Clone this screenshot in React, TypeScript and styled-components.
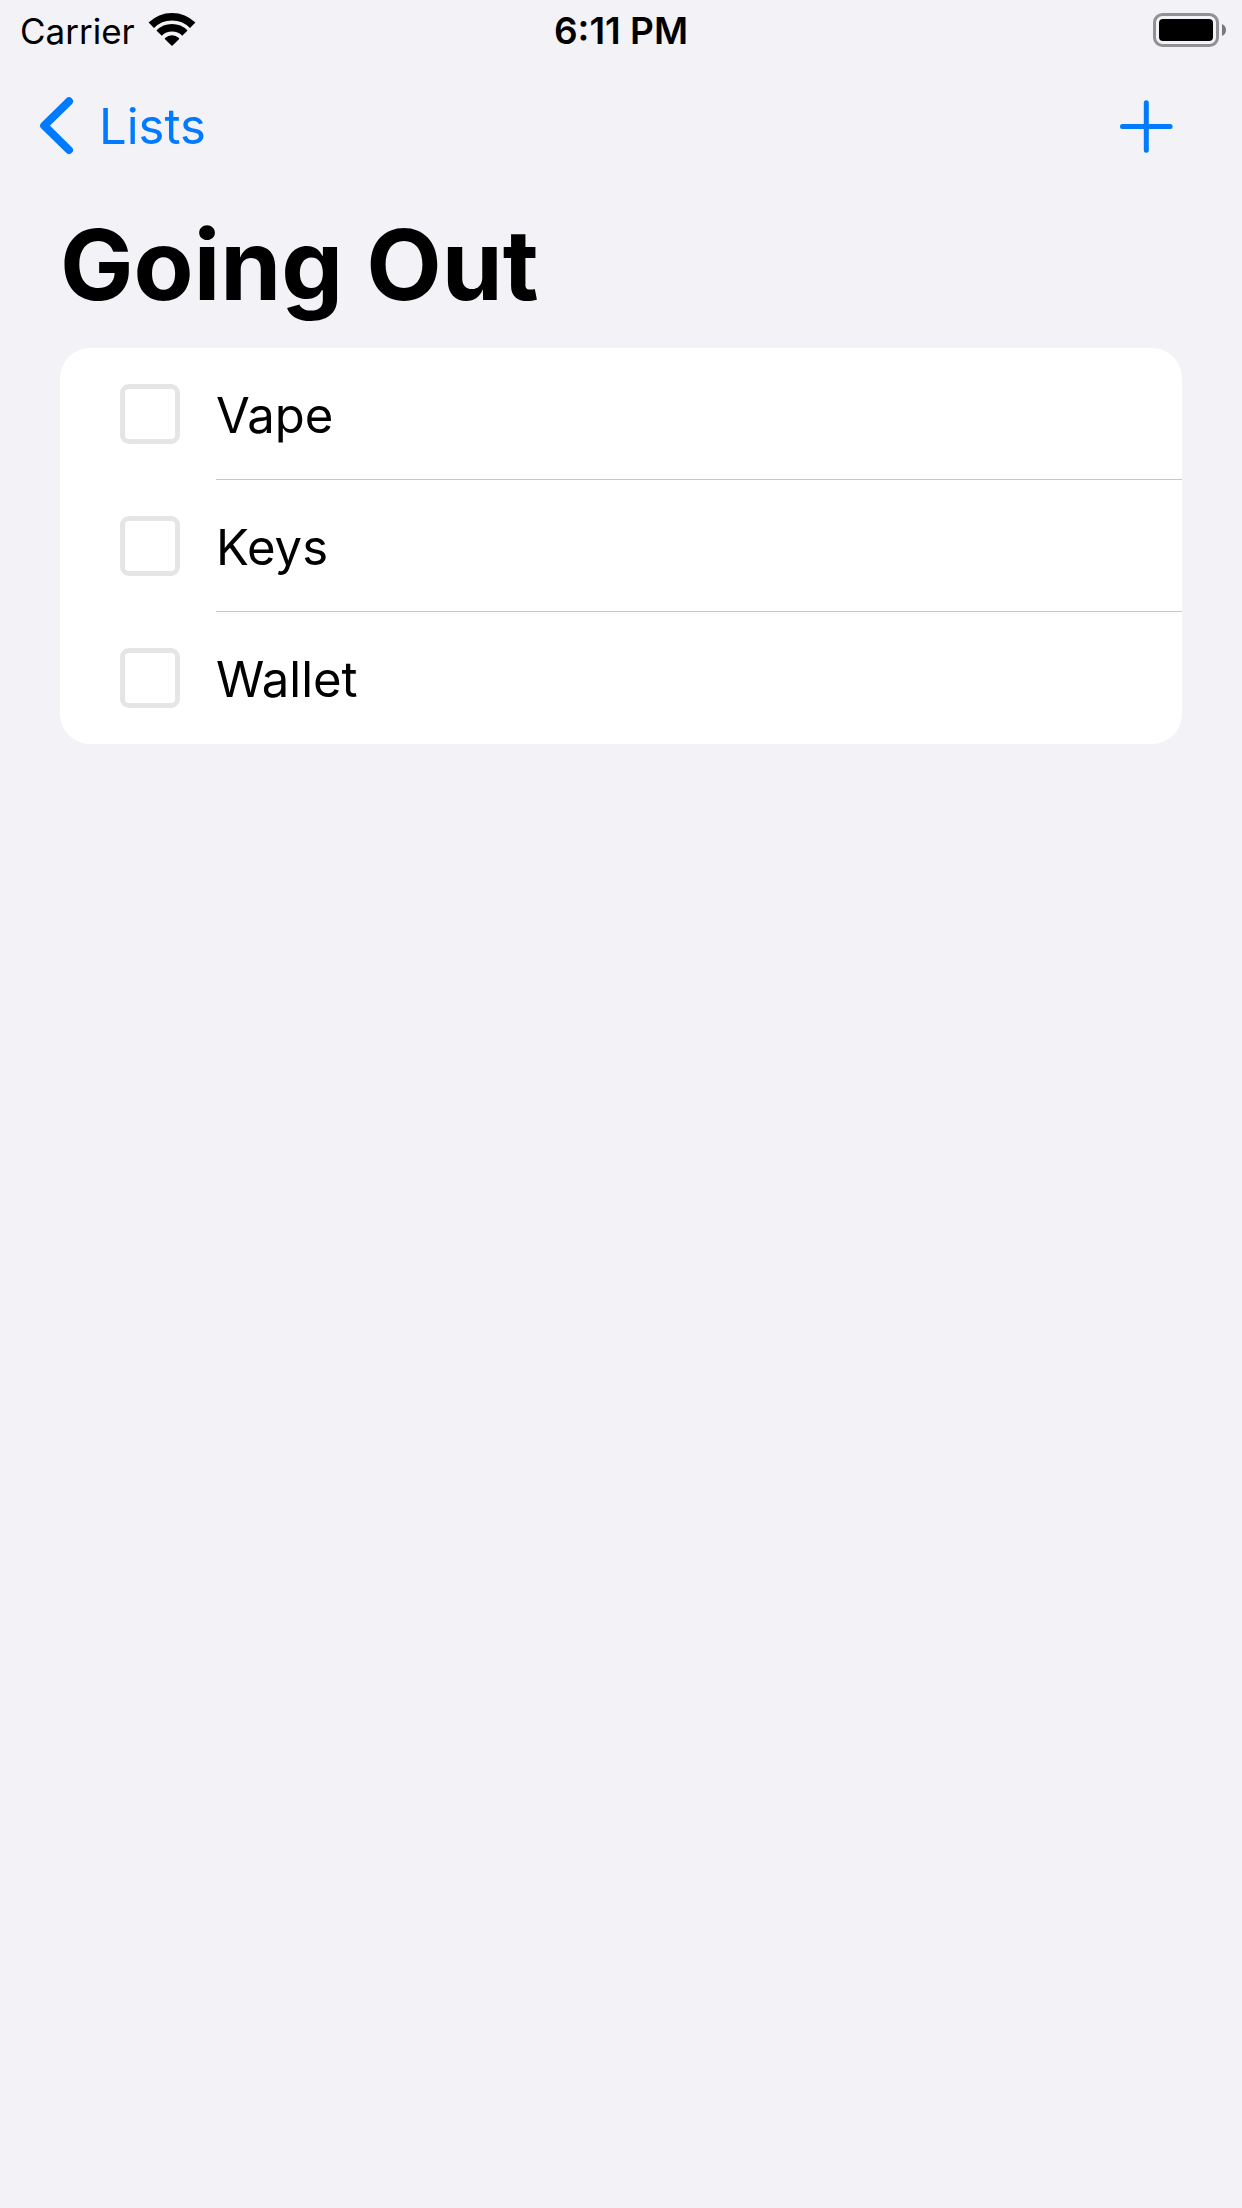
import { useState } from 'react';
import styled, { createGlobalStyle } from 'styled-components';

const GlobalStyle = createGlobalStyle`
  *, *::before, *::after { box-sizing: border-box; }
  body {
    margin: 0;
    background: #f2f2f7;
    color: #000;
    font-family: Inter, Roboto, sans-serif;
  }
`;

const Screen = styled.div`
  display: flex;
  flex-direction: column;
  min-height: 100vh;
`;

const StatusBar = styled.div`
  display: grid;
  grid-template-columns: 1fr auto 1fr;
  align-items: center;
  height: 60px;
  padding: 0 16px;
  font-size: 35px;
  line-height: 44px;
`;

const Carrier = styled.div`
  display: flex;
  align-items: center;
  gap: 13px;
  padding-left: 4px;
`;

const Clock = styled.time`
  padding-top: 2px;
  font-size: 37px;
  font-weight: 600;
`;

const CarrierName = styled.span`
  padding-top: 2px;
`;

const BatterySlot = styled.div`
  display: flex;
  justify-content: flex-end;
`;

const Icon = styled.svg`
  display: block;
  flex: none;
`;

const NavBar = styled.nav`
  display: flex;
  align-items: center;
  justify-content: space-between;
  height: 132px;
  padding: 0 60px 0 36px;
`;

const BackLink = styled.a`
  display: flex;
  align-items: center;
  gap: 21px;
  color: #007aff;
  font-size: 49px;
  line-height: 62px;
  text-decoration: none;
`;

const BackText = styled.span`
  padding-top: 2px;
`;

const AddButton = styled.button`
  display: flex;
  align-items: center;
  justify-content: center;
  width: 72px;
  height: 72px;
  padding: 0;
  border: 0;
  background: none;
  color: #007aff;
  cursor: pointer;
`;

const Title = styled.h1`
  margin: 0;
  padding: 12px 60px 22px;
  font-size: 98px;
  line-height: 122px;
  font-weight: 700;
`;

const List = styled.ul`
  margin: 0 60px;
  padding: 0;
  list-style: none;
  background: #fff;
  border-radius: 30px;
  overflow: hidden;
`;

const Row = styled.li`
  padding-left: 60px;
`;

const RowLabel = styled.label`
  display: flex;
  gap: 36px;
  height: 132px;
  font-size: 49px;
  line-height: 64px;
`;

const RowText = styled.span`
  flex: 1;
  padding-top: 36px;
  border-bottom: 1px solid #c6c6c8;

  ${Row}:last-child & {
    border-bottom: 0;
  }
`;

const Checkbox = styled.input`
  appearance: none;
  flex: none;
  width: 60px;
  height: 60px;
  margin: 36px 0 0;
  border: 5px solid #e5e5e5;
  border-radius: 9px;
  background: #fff;

  &:checked {
    border-color: #007aff;
    background: #007aff;
  }
`;

const ITEMS = ['Vape', 'Keys', 'Wallet'];

const WifiIcon = () => (
  <Icon width="48" height="36" viewBox="0 0 48 36" fill="none" aria-hidden="true">
    <path d="M3.3 13.3A29.3 29.3 0 0 1 44.7 13.3" stroke="#000" strokeWidth="7.6" />
    <path d="M11.1 21.1A18.3 18.3 0 0 1 36.9 21.1" stroke="#000" strokeWidth="7.6" />
    <path
      d="M24 33L17.6 26.6A9.6 9.6 0 0 1 30.4 26.6Z"
      fill="#000"
      stroke="#000"
      strokeWidth="1.6"
      strokeLinejoin="round"
    />
  </Icon>
);

const BatteryIcon = () => (
  <Icon width="73" height="34" viewBox="0 0 73 34" fill="none" role="img" aria-label="Battery full">
    <rect x="1.5" y="1.5" width="63" height="31" rx="8" stroke="#919095" strokeWidth="3" />
    <rect x="6" y="6" width="54" height="22" rx="4" fill="#000" />
    <path d="M69 11C71.5 12 73 14 73 17S71.5 22 69 23Z" fill="#79797d" />
  </Icon>
);

const ChevronIcon = () => (
  <Icon width="42" height="60" viewBox="0 0 42 60" fill="none" aria-hidden="true">
    <path
      d="M33 5.3L8.2 29.7L33 54"
      stroke="currentColor"
      strokeWidth="8"
      strokeLinecap="round"
      strokeLinejoin="round"
    />
  </Icon>
);

const PlusIcon = () => (
  <Icon width="54" height="54" viewBox="0 0 54 54" fill="none" aria-hidden="true">
    <path
      d="M27.3 3.7V51.3M3.5 27.5H51.1"
      stroke="currentColor"
      strokeWidth="5"
      strokeLinecap="round"
    />
  </Icon>
);

export default function App() {
  const [checked, setChecked] = useState<Record<string, boolean>>({});

  const toggle = (item: string) =>
    setChecked((current) => ({ ...current, [item]: !current[item] }));

  return (
    <Screen>
      <GlobalStyle />
      <StatusBar>
        <Carrier>
          <CarrierName>Carrier</CarrierName>
          <WifiIcon />
        </Carrier>
        <Clock dateTime="18:11">6:11 PM</Clock>
        <BatterySlot>
          <BatteryIcon />
        </BatterySlot>
      </StatusBar>
      <NavBar>
        <BackLink href="#lists">
          <ChevronIcon />
          <BackText>Lists</BackText>
        </BackLink>
        <AddButton type="button" aria-label="Add item">
          <PlusIcon />
        </AddButton>
      </NavBar>
      <main>
        <Title>Going Out</Title>
        <List>
          {ITEMS.map((item) => (
            <Row key={item}>
              <RowLabel>
                <Checkbox
                  type="checkbox"
                  checked={Boolean(checked[item])}
                  onChange={() => toggle(item)}
                />
                <RowText>{item}</RowText>
              </RowLabel>
            </Row>
          ))}
        </List>
      </main>
    </Screen>
  );
}
